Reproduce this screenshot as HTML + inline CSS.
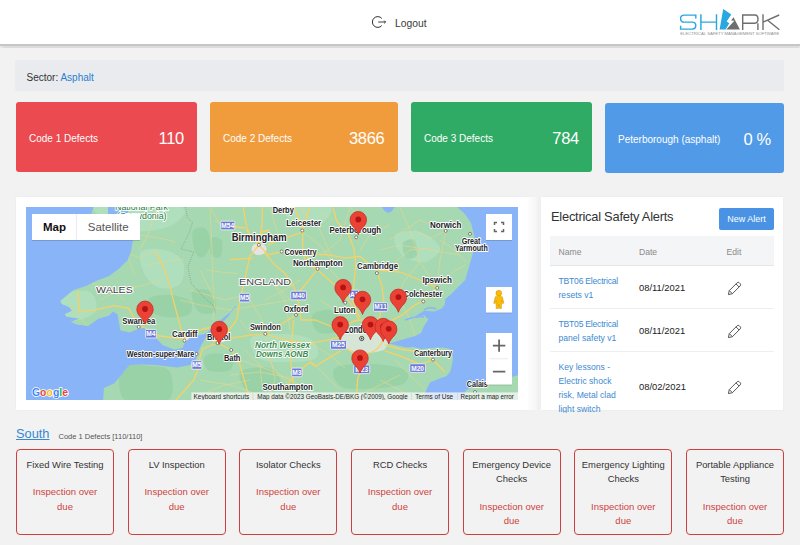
<!DOCTYPE html>
<html><head><meta charset="utf-8">
<style>
*{box-sizing:border-box}
html,body{margin:0;padding:0}
body{width:800px;height:545px;overflow:hidden;position:relative;background:#f2f2f2;font-family:"Liberation Sans",sans-serif;color:#333}
.abs{position:absolute}
#hdr{left:0;top:0;width:800px;height:44px;background:#fff;box-shadow:0 1.7px 0.5px #c6c6c6,0 3.6px 1px #dcdcdc}
.card{position:absolute;top:102px;height:70px;border-radius:3px;color:#fff}
.card .l{position:absolute;left:13px;top:2px;line-height:70px;font-size:10px}
.card .n{position:absolute;right:13px;top:1.1px;line-height:70px;font-size:16.5px;letter-spacing:-0.3px}
.panel{position:absolute;background:#fff;box-shadow:0 0 2px rgba(0,0,0,.05)}
.bc{position:absolute;top:449px;width:98px;height:86px;border:1.8px solid #cf3f3f;border-radius:4px;text-align:center;font-size:9.4px;line-height:14px;color:#333}
.bc .t{position:absolute;left:0;right:0;top:7.5px}
.bc .s{position:absolute;left:0;right:0;top:35.2px;color:#cc4341;font-size:9.5px;line-height:14.6px}
.bc .s2{top:49.5px}
.lk{position:absolute;left:17.5px;font-size:8.6px;line-height:13.9px;color:#3d8ad2}
.dt{position:absolute;left:98px;font-size:9.4px;line-height:12px;color:#222;margin-top:-0.6px}
.pc{position:absolute;left:187px}
.sep{position:absolute;left:9px;width:224px;height:1px;background:#eceef1}
</style></head><body>
<div id="hdr" class="abs">
  <svg class="abs" style="left:371.5px;top:16.3px" width="15" height="12" viewBox="0 0 15 12">
    <path d="M9.8 2.4 A5.4 5.4 0 1 0 9.8 9.6" fill="none" stroke="#333" stroke-width="1"/>
    <path d="M6.2 6 H13.6 M12.2 4.6 L13.6 6 L12.2 7.4" fill="none" stroke="#333" stroke-width="0.95"/>
  </svg>
  <div class="abs" style="left:395px;top:17.6px;font-size:10.3px;line-height:12px;color:#3a3a3a">Logout</div>
  <svg class="abs" style="left:675px;top:5px" width="110" height="35" viewBox="675 5 110 35">
    <g fill="none" stroke="#29a8e0" stroke-width="1.45">
      <path d="M695.8 18.4 V15.1 H684.2 Q680.6 15.1 680.6 18.4 Q680.6 22.1 684.2 22.1 H692.2 Q695.8 22.1 695.8 25.6 Q695.8 29.1 692.2 29.1 H680.6 V25.8"/>
      <path d="M700.9 14.3 V29.9 M716.5 14.3 V29.9 M700.9 22.1 H716.5"/>
    </g>
    <path d="M723.2 9.1 L731.3 14.6 L726.6 21.5 L729.3 23.2 L725.6 29.6 L719.6 29.6 Z" fill="#29a8e0"/>
    <path d="M733.5 17.2 L739.9 29.6 L726.3 29.6 L734.4 20.8 L731.1 20.4 Z" fill="#6d6e70"/>
    <g fill="none" stroke="#6d6e70" stroke-width="1.4">
      <path d="M742.7 29.9 V15 H754.8 Q758 15 758 19.1 Q758 23.2 754.8 23.2 H742.7 M757.9 23.2 V29.9"/>
      <path d="M763 14.3 V29.9 M763.6 21.8 L779.2 15 M767.6 20.2 L779.4 29.7"/>
    </g>
    <text x="680.3" y="35" font-family="Liberation Sans" font-size="2.9" fill="#8f8f8f" textLength="99" lengthAdjust="spacingAndGlyphs">ELECTRICAL SAFETY MANAGEMENT SOFTWARE</text>
  </svg>
</div>

<div class="abs" style="left:15px;top:59.5px;width:769px;height:31.5px;background:#e9ebee;border-radius:2px"></div>
<div class="abs" style="left:26.5px;top:71.6px;font-size:10px;line-height:12px;color:#333">Sector: <span style="color:#2a7fcf">Asphalt</span></div>

<div class="card" style="left:16px;width:181px;background:#eb4a50"><span class="l">Code 1 Defects</span><span class="n">110</span></div>
<div class="card" style="left:210px;width:187.5px;background:#f09c3c"><span class="l">Code 2 Defects</span><span class="n">3866</span></div>
<div class="card" style="left:411px;width:181px;background:#30ab65"><span class="l">Code 3 Defects</span><span class="n">784</span></div>
<div class="card" style="left:605px;width:179px;top:103px;background:#519ae7"><span class="l">Peterborough (asphalt)</span><span class="n">0 %</span></div>

<div class="panel" style="left:16px;top:197px;width:512px;height:213px"></div>
<div class="abs" style="left:528px;top:197px;width:11px;height:213px;background:linear-gradient(to right,rgba(255,255,255,.85),rgba(255,255,255,.35) 70%,rgba(0,0,0,.015))"></div>
<svg class="abs" style="left:0;top:0" width="800" height="545" viewBox="0 0 800 545">
<defs><clipPath id="mc"><rect x="26" y="207" width="492" height="193"/></clipPath>
<clipPath id="lc"><polygon points="93.5,206.0 91.5,214.0 133.0,240.0 131.0,251.0 127.8,260.0 119.0,268.8 108.7,276.2 97.0,280.6 86.7,285.7 73.5,290.1 60.3,301.1 61.7,304.0 69.1,307.0 72.0,310.7 64.7,314.3 66.2,316.5 79.4,318.7 70.6,321.7 76.4,324.6 88.2,326.1 98.5,318.7 108.7,315.8 113.1,311.4 117.5,314.3 119.0,323.1 120.5,330.5 130.0,332.5 138.0,329.0 144.0,328.0 152.5,332.5 155.0,337.0 162.5,345.0 173.8,349.4 182.5,348.0 185.0,342.5 190.0,337.5 200.0,335.0 206.2,333.5 213.0,327.0 220.0,320.5 229.0,313.2 230.0,314.6 222.0,323.0 213.0,332.0 206.2,337.0 201.2,345.0 198.1,352.5 196.2,358.8 190.0,365.0 177.5,367.5 155.0,365.0 142.5,364.4 130.0,365.0 127.0,368.0 121.8,374.7 114.0,383.5 104.0,388.0 103.0,401.0 422.3,401.0 426.3,390.0 430.0,382.5 438.8,378.8 446.3,376.3 450.5,371.3 453.0,358.8 452.0,351.0 449.0,348.5 441.7,347.5 431.4,348.0 421.1,349.0 413.8,347.0 406.4,347.5 397.6,345.5 389.0,343.5 394.7,341.7 406.4,338.5 415.2,336.0 421.1,333.0 424.0,326.0 428.5,319.6 424.0,315.2 412.3,318.2 424.0,310.8 434.3,311.6 441.7,308.6 444.6,305.0 445.3,299.1 450.5,294.7 456.4,288.8 465.2,280.0 471.0,260.0 475.4,244.0 474.0,235.0 471.0,223.0 465.0,214.0 456.0,206.0 395.2,206.0 392.0,211.0 388.5,213.0 384.7,211.0 381.0,206.0 128.5,206.0 128.0,214.0 108.0,214.0 108.0,206.0"/><polygon points="462.0,401.0 466.0,390.0 481.0,384.0 501.0,380.0 519.0,375.0 519.0,401.0"/></clipPath>
<g id="mk"><path d="M0,15.2 C-1,11.8 -3,9.6 -5.4,7.1 C-7.4,4.8 -8.2,2.6 -8.2,0.2 A8.2,8.2 0 1 1 8.2,0.2 C8.2,2.6 7.4,4.8 5.4,7.1 C3,9.6 1,11.8 0,15.2 Z" fill="#ea4335" stroke="#c5221f" stroke-width="0.7"/><circle cx="0" cy="0" r="2.9" fill="#b31412"/></g>
<filter id="sh" x="-10%" y="-10%" width="120%" height="130%"><feDropShadow dx="0" dy="0.6" stdDeviation="0.6" flood-color="#000" flood-opacity="0.25"/></filter>
</defs>
<g clip-path="url(#mc)">
<rect x="26" y="207" width="492" height="193" fill="#8ab4f8"/>
<polygon points="93.5,206.0 91.5,214.0 133.0,240.0 131.0,251.0 127.8,260.0 119.0,268.8 108.7,276.2 97.0,280.6 86.7,285.7 73.5,290.1 60.3,301.1 61.7,304.0 69.1,307.0 72.0,310.7 64.7,314.3 66.2,316.5 79.4,318.7 70.6,321.7 76.4,324.6 88.2,326.1 98.5,318.7 108.7,315.8 113.1,311.4 117.5,314.3 119.0,323.1 120.5,330.5 130.0,332.5 138.0,329.0 144.0,328.0 152.5,332.5 155.0,337.0 162.5,345.0 173.8,349.4 182.5,348.0 185.0,342.5 190.0,337.5 200.0,335.0 206.2,333.5 213.0,327.0 220.0,320.5 229.0,313.2 230.0,314.6 222.0,323.0 213.0,332.0 206.2,337.0 201.2,345.0 198.1,352.5 196.2,358.8 190.0,365.0 177.5,367.5 155.0,365.0 142.5,364.4 130.0,365.0 127.0,368.0 121.8,374.7 114.0,383.5 104.0,388.0 103.0,401.0 422.3,401.0 426.3,390.0 430.0,382.5 438.8,378.8 446.3,376.3 450.5,371.3 453.0,358.8 452.0,351.0 449.0,348.5 441.7,347.5 431.4,348.0 421.1,349.0 413.8,347.0 406.4,347.5 397.6,345.5 389.0,343.5 394.7,341.7 406.4,338.5 415.2,336.0 421.1,333.0 424.0,326.0 428.5,319.6 424.0,315.2 412.3,318.2 424.0,310.8 434.3,311.6 441.7,308.6 444.6,305.0 445.3,299.1 450.5,294.7 456.4,288.8 465.2,280.0 471.0,260.0 475.4,244.0 474.0,235.0 471.0,223.0 465.0,214.0 456.0,206.0 395.2,206.0 392.0,211.0 388.5,213.0 384.7,211.0 381.0,206.0 128.5,206.0 128.0,214.0 108.0,214.0 108.0,206.0" fill="#a6d9b1"/>
<polygon points="462.0,401.0 466.0,390.0 481.0,384.0 501.0,380.0 519.0,375.0 519.0,401.0" fill="#a6d9b1"/>
<g clip-path="url(#lc)">
<path d="M141.0,252.0 C144.3,247.8 158.0,248.3 165.0,250.0 C172.0,251.7 180.5,256.3 183.0,262.0 C185.5,267.7 183.8,279.7 180.0,284.0 C176.2,288.3 165.8,289.5 160.0,288.0 C154.2,286.5 148.2,281.0 145.0,275.0 C141.8,269.0 137.7,256.2 141.0,252.0Z" fill="#b8e3c4" opacity="0.6"/>
<path d="M95.0,207.0 C103.3,203.2 167.5,203.8 180.0,207.0 C192.5,210.2 178.3,222.2 170.0,226.0 C161.7,229.8 142.5,233.2 130.0,230.0 C117.5,226.8 86.7,210.8 95.0,207.0Z" fill="#b8e3c4" opacity="0.6"/>
<path d="M252.0,337.0 C256.5,333.0 275.0,333.5 285.0,334.0 C295.0,334.5 306.8,336.0 312.0,340.0 C317.2,344.0 320.5,354.3 316.0,358.0 C311.5,361.7 294.7,362.0 285.0,362.0 C275.3,362.0 263.5,362.2 258.0,358.0 C252.5,353.8 247.5,341.0 252.0,337.0Z" fill="#b8e3c4" opacity="0.6"/>
<path d="M60.0,296.0 C63.3,291.3 84.2,289.3 90.0,292.0 C95.8,294.7 98.3,307.3 95.0,312.0 C91.7,316.7 75.8,322.7 70.0,320.0 C64.2,317.3 56.7,300.7 60.0,296.0Z" fill="#b8e3c4" opacity="0.6"/>
<path d="M285.0,205.0 C291.3,202.7 324.2,203.8 330.0,207.0 C335.8,210.2 326.3,221.7 320.0,224.0 C313.7,226.3 297.8,224.2 292.0,221.0 C286.2,217.8 278.7,207.3 285.0,205.0Z" fill="#b8e3c4" opacity="0.6"/>
<path d="M395.0,235.0 C398.0,231.2 412.5,229.8 420.0,232.0 C427.5,234.2 439.2,243.0 440.0,248.0 C440.8,253.0 431.3,260.8 425.0,262.0 C418.7,263.2 407.0,259.5 402.0,255.0 C397.0,250.5 392.0,238.8 395.0,235.0Z" fill="#b8e3c4" opacity="0.6"/>
<path d="M150.0,298.0 C153.7,295.5 165.2,294.3 172.0,295.0 C178.8,295.7 188.3,298.7 191.0,302.0 C193.7,305.3 192.3,312.5 188.0,315.0 C183.7,317.5 171.3,317.8 165.0,317.0 C158.7,316.2 152.5,313.2 150.0,310.0 C147.5,306.8 146.3,300.5 150.0,298.0Z" fill="#94cea3" opacity="0.65"/>
<path d="M122.0,368.0 C126.2,362.3 142.0,365.3 150.0,366.0 C158.0,366.7 167.0,366.3 170.0,372.0 C173.0,377.7 175.5,395.3 168.0,400.0 C160.5,404.7 132.7,405.3 125.0,400.0 C117.3,394.7 117.8,373.7 122.0,368.0Z" fill="#94cea3" opacity="0.65"/>
<path d="M205.0,356.0 C207.8,353.3 220.3,353.0 225.0,354.0 C229.7,355.0 232.5,359.2 233.0,362.0 C233.5,364.8 232.2,369.7 228.0,371.0 C223.8,372.3 211.8,372.5 208.0,370.0 C204.2,367.5 202.2,358.7 205.0,356.0Z" fill="#94cea3" opacity="0.65"/>
<path d="M192.0,292.0 C193.7,288.5 204.0,288.7 208.0,290.0 C212.0,291.3 215.2,296.2 216.0,300.0 C216.8,303.8 216.0,311.2 213.0,313.0 C210.0,314.8 201.5,314.5 198.0,311.0 C194.5,307.5 190.3,295.5 192.0,292.0Z" fill="#94cea3" opacity="0.65"/>
<path d="M193.0,231.0 C194.8,227.2 203.2,226.7 206.0,229.0 C208.8,231.3 210.5,240.3 210.0,245.0 C209.5,249.7 205.5,255.8 203.0,257.0 C200.5,258.2 196.7,256.3 195.0,252.0 C193.3,247.7 191.2,234.8 193.0,231.0Z" fill="#94cea3" opacity="0.65"/>
<path d="M212.0,238.0 C213.8,235.8 220.7,237.8 222.0,241.0 C223.3,244.2 221.8,254.8 220.0,257.0 C218.2,259.2 212.3,257.2 211.0,254.0 C209.7,250.8 210.2,240.2 212.0,238.0Z" fill="#94cea3" opacity="0.65"/>
<path d="M403.0,243.0 C404.3,240.0 411.7,238.0 414.0,240.0 C416.3,242.0 418.3,252.0 417.0,255.0 C415.7,258.0 408.3,260.0 406.0,258.0 C403.7,256.0 401.7,246.0 403.0,243.0Z" fill="#94cea3" opacity="0.65"/>
<path d="M312.0,316.0 C314.0,312.3 325.0,309.0 330.0,310.0 C335.0,311.0 341.2,318.3 342.0,322.0 C342.8,325.7 339.0,330.3 335.0,332.0 C331.0,333.7 321.8,334.7 318.0,332.0 C314.2,329.3 310.0,319.7 312.0,316.0Z" fill="#94cea3" opacity="0.65"/>
<path d="M335.0,368.0 C339.2,364.0 358.3,363.7 370.0,364.0 C381.7,364.3 400.0,366.5 405.0,370.0 C410.0,373.5 410.0,382.0 400.0,385.0 C390.0,388.0 355.8,390.8 345.0,388.0 C334.2,385.2 330.8,372.0 335.0,368.0Z" fill="#94cea3" opacity="0.65"/>
<path d="M100.0,232.0 C104.3,227.0 124.3,231.3 128.0,236.0 C131.7,240.7 126.3,255.0 122.0,260.0 C117.7,265.0 105.7,270.7 102.0,266.0 C98.3,261.3 95.7,237.0 100.0,232.0Z" fill="#94cea3" opacity="0.65"/>
<path d="M240.0,372.0 C243.3,368.0 263.3,365.8 270.0,368.0 C276.7,370.2 283.3,381.0 280.0,385.0 C276.7,389.0 256.7,394.2 250.0,392.0 C243.3,389.8 236.7,376.0 240.0,372.0Z" fill="#94cea3" opacity="0.65"/>
<path d="M342,332 Q350,327 362,329 Q378,328 386,334 Q392,342 384,350 Q370,355 355,352 Q343,349 341,341 Z" fill="#e2e7e0" opacity="0.8"/>
<ellipse cx="259" cy="249" rx="7.5" ry="6" fill="#e6e4e2"/>
<ellipse cx="221" cy="339" rx="5" ry="3.5" fill="#e2e6e2"/>
<ellipse cx="186" cy="339" rx="4" ry="2.5" fill="#e2e6e2"/>
<path d="M155.0,207.0 L150.0,230.0 L140.0,250.0" fill="none" stroke="#e8d68c" stroke-width="0.75" opacity="0.8"/>
<path d="M110.0,220.0 L125.0,250.0 L135.0,275.0" fill="none" stroke="#e8d68c" stroke-width="0.75" opacity="0.8"/>
<path d="M200.0,270.0 L215.0,300.0 L213.0,320.0" fill="none" stroke="#e8d68c" stroke-width="0.75" opacity="0.8"/>
<path d="M190.0,290.0 L225.0,300.0 L245.0,295.0" fill="none" stroke="#e8d68c" stroke-width="0.75" opacity="0.8"/>
<path d="M265.0,300.0 L285.0,290.0 L300.0,280.0" fill="none" stroke="#e8d68c" stroke-width="0.75" opacity="0.8"/>
<path d="M230.0,310.0 L260.0,305.0 L290.0,300.0" fill="none" stroke="#e8d68c" stroke-width="0.75" opacity="0.8"/>
<path d="M300.0,207.0 L320.0,230.0 L333.0,260.0" fill="none" stroke="#e8d68c" stroke-width="0.75" opacity="0.8"/>
<path d="M320.0,256.0 L340.0,240.0 L350.0,207.0" fill="none" stroke="#e8d68c" stroke-width="0.75" opacity="0.8"/>
<path d="M380.0,250.0 L400.0,245.0 L430.0,250.0 L460.0,255.0" fill="none" stroke="#e8d68c" stroke-width="0.75" opacity="0.8"/>
<path d="M400.0,207.0 L410.0,230.0 L420.0,262.0 L437.0,288.0" fill="none" stroke="#e8d68c" stroke-width="0.75" opacity="0.8"/>
<path d="M437.0,288.0 L455.0,270.0 L466.0,265.0" fill="none" stroke="#e8d68c" stroke-width="0.75" opacity="0.8"/>
<path d="M446.0,231.0 L440.0,260.0 L437.0,288.0" fill="none" stroke="#e8d68c" stroke-width="0.75" opacity="0.8"/>
<path d="M390.0,240.0 L420.0,220.0 L446.0,231.0" fill="none" stroke="#e8d68c" stroke-width="0.75" opacity="0.8"/>
<path d="M395.0,300.0 L405.0,280.0 L420.0,262.0" fill="none" stroke="#e8d68c" stroke-width="0.75" opacity="0.8"/>
<path d="M270.0,280.0 L285.0,300.0 L290.0,330.0" fill="none" stroke="#e8d68c" stroke-width="0.75" opacity="0.8"/>
<path d="M300.0,350.0 L320.0,370.0 L340.0,390.0" fill="none" stroke="#e8d68c" stroke-width="0.75" opacity="0.8"/>
<path d="M240.0,360.0 L270.0,370.0 L300.0,385.0" fill="none" stroke="#e8d68c" stroke-width="0.75" opacity="0.8"/>
<path d="M200.0,380.0 L230.0,385.0 L260.0,395.0" fill="none" stroke="#e8d68c" stroke-width="0.75" opacity="0.8"/>
<path d="M395.0,360.0 L410.0,375.0 L425.0,390.0" fill="none" stroke="#e8d68c" stroke-width="0.75" opacity="0.8"/>
<path d="M130.0,345.0 L160.0,337.0" fill="none" stroke="#e8d68c" stroke-width="0.75" opacity="0.8"/>
<path d="M70.0,305.0 L90.0,330.0" fill="none" stroke="#e8d68c" stroke-width="0.75" opacity="0.8"/>
<path d="M210.0,207.0 L220.0,225.0 L231.0,226.0" fill="none" stroke="#e8d68c" stroke-width="0.75" opacity="0.8"/>
<path d="M350.0,207.0 L365.0,225.0 L380.0,240.0" fill="none" stroke="#e8d68c" stroke-width="0.75" opacity="0.8"/>
<path d="M270.0,207.0 L275.0,225.0 L280.0,240.0" fill="none" stroke="#e8d68c" stroke-width="0.75" opacity="0.8"/>
<path d="M240.0,320.0 L260.0,345.0 L275.0,370.0 L290.0,385.0" fill="none" stroke="#e8d68c" stroke-width="0.75" opacity="0.8"/>
<path d="M330.0,270.0 L345.0,285.0 L343.0,300.0" fill="none" stroke="#e8d68c" stroke-width="0.75" opacity="0.8"/>
<path d="M300.0,230.0 L320.0,245.0 L335.0,265.0" fill="none" stroke="#e8d68c" stroke-width="0.75" opacity="0.8"/>
<path d="M140.0,235.0 L160.0,238.0 L175.0,242.0" fill="none" stroke="#e8d68c" stroke-width="0.75" opacity="0.8"/>
<path d="M147.0,265.0 L165.0,262.0 L183.8,259.5" fill="none" stroke="#e8d68c" stroke-width="0.75" opacity="0.8"/>
<path d="M210.0,207.0 L212.0,250.0 L213.5,300.0" fill="none" stroke="#e8d68c" stroke-width="0.75" opacity="0.8"/>
<path d="M206.5,270.0 L220.0,272.0 L238.0,273.5" fill="none" stroke="#e8d68c" stroke-width="0.75" opacity="0.8"/>
<path d="M215.0,221.0 L230.0,226.0" fill="none" stroke="#e8d68c" stroke-width="0.75" opacity="0.8"/>
<path d="M100.0,300.0 L120.0,290.0 L145.0,285.0 L160.0,280.0" fill="none" stroke="#e8d68c" stroke-width="0.75" opacity="0.8"/>
<path d="M120.0,250.0 L140.0,258.0 L155.0,251.0" fill="none" stroke="#e8d68c" stroke-width="0.75" opacity="0.8"/>
<path d="M90.0,282.0 L110.0,290.0 L125.0,300.0" fill="none" stroke="#e8d68c" stroke-width="0.75" opacity="0.8"/>
<path d="M180.0,300.0 L200.0,305.0 L230.0,310.0" fill="none" stroke="#e8d68c" stroke-width="0.75" opacity="0.8"/>
<path d="M250.0,300.0 L262.0,320.0 L265.3,333.8" fill="none" stroke="#e8d68c" stroke-width="0.75" opacity="0.8"/>
<path d="M230.0,375.0 L260.0,372.0 L290.0,378.0" fill="none" stroke="#e8d68c" stroke-width="0.75" opacity="0.8"/>
<path d="M200.0,395.0 L225.0,385.0 L250.0,380.0" fill="none" stroke="#e8d68c" stroke-width="0.75" opacity="0.8"/>
<path d="M265.3,333.8 L270.0,355.0 L275.0,380.0 L268.0,400.0" fill="none" stroke="#e8d68c" stroke-width="0.75" opacity="0.8"/>
<path d="M310.0,343.0 L330.0,355.0 L345.0,368.0" fill="none" stroke="#e8d68c" stroke-width="0.75" opacity="0.8"/>
<path d="M380.0,380.0 L400.0,390.0 L415.0,400.0" fill="none" stroke="#e8d68c" stroke-width="0.75" opacity="0.8"/>
<path d="M320.0,300.0 L335.0,310.0 L345.0,325.0" fill="none" stroke="#e8d68c" stroke-width="0.75" opacity="0.8"/>
<path d="M275.0,285.0 L290.0,300.0" fill="none" stroke="#e8d68c" stroke-width="0.75" opacity="0.8"/>
<path d="M360.0,250.0 L370.0,235.0 L390.0,225.0" fill="none" stroke="#e8d68c" stroke-width="0.75" opacity="0.8"/>
<path d="M395.0,262.0 L410.0,250.0 L430.0,248.0" fill="none" stroke="#e8d68c" stroke-width="0.75" opacity="0.8"/>
<path d="M300.0,207.0 L305.0,215.0" fill="none" stroke="#e8d68c" stroke-width="0.75" opacity="0.8"/>
<path d="M320.0,212.0 L333.0,221.0" fill="none" stroke="#e8d68c" stroke-width="0.75" opacity="0.8"/>
<path d="M400.0,300.0 L410.0,320.0 L415.0,335.0" fill="none" stroke="#e8d68c" stroke-width="0.75" opacity="0.8"/>
<path d="M360.0,395.0 L380.0,385.0 L400.0,375.0" fill="none" stroke="#e8d68c" stroke-width="0.75" opacity="0.8"/>
<path d="M440.0,240.0 L455.0,250.0 L466.0,262.0" fill="none" stroke="#e8d68c" stroke-width="0.75" opacity="0.8"/>
<path d="M414.0,230.0 L430.0,238.0 L446.0,231.0" fill="none" stroke="#e8d68c" stroke-width="0.75" opacity="0.8"/>
<path d="M245.0,350.0 L260.0,365.0 L262.0,385.0" fill="none" stroke="#e8d68c" stroke-width="0.75" opacity="0.8"/>
<path d="M185.5,207.0 L187.3,217.5 L192.5,222.8 L189.0,233.3 L181.1,249.0 L193.7,252.0 L188.0,266.5 L191.0,283.0 L204.7,298.0 L213.0,305.0 L215.7,313.0" fill="none" stroke="#7d8a80" stroke-width="0.7" stroke-dasharray="0.8,1.3"/>
<path d="M229,314 Q233,310 236,306" fill="none" stroke="#8ab4f8" stroke-width="0.9"/>
<path d="M424,310 Q430,306 436,309 M405,320 Q415,316 424,317" fill="none" stroke="#8ab4f8" stroke-width="1.5"/>
<path d="M138.8,326.9 L142.5,326.9 L150.0,331.0 L157.5,335.6 L171.2,337.5 L183.8,338.8 L200.0,330.0 L210.0,327.5 L220.0,332.0 L228.8,338.7 L248.2,335.4 L264.5,333.8 L277.5,337.9 L290.5,341.1 L310.0,342.8 L323.0,341.2 L338.5,337.4" fill="none" stroke="#f7d165" stroke-width="1.3" stroke-linejoin="round"/>
<path d="M258.9,244.9 L249.8,256.4 L246.5,271.3 L243.2,286.2 L240.0,301.0 L236.6,320.0 L226.0,334.0 L217.5,343.0 L211.2,340.0" fill="none" stroke="#f7d165" stroke-width="1.3" stroke-linejoin="round"/>
<path d="M217.5,343.0 L202.5,348.8 L200.0,357.5 L197.5,370.0 L193.8,380.0 L186.5,388.2 L175.0,401.0" fill="none" stroke="#f7d165" stroke-width="1.3" stroke-linejoin="round"/>
<path d="M243.3,207.0 L245.0,217.5 L246.8,228.0 L252.0,238.5 L258.9,244.9" fill="none" stroke="#f7d165" stroke-width="1.3" stroke-linejoin="round"/>
<path d="M231.0,226.3 L245.0,228.0" fill="none" stroke="#f7d165" stroke-width="1.3" stroke-linejoin="round"/>
<path d="M258.9,244.9 L268.0,254.8 L281.7,251.5" fill="none" stroke="#f7d165" stroke-width="1.3" stroke-linejoin="round"/>
<path d="M268.0,244.9 L279.6,239.9 L299.4,233.3 L302.7,230.0 L306.0,218.0 L310.0,207.0" fill="none" stroke="#f7d165" stroke-width="1.3" stroke-linejoin="round"/>
<path d="M262.5,207.0 L262.0,225.0 L258.9,244.9" fill="none" stroke="#f7d165" stroke-width="1.3" stroke-linejoin="round"/>
<path d="M294.5,207.0 L300.0,222.0 L302.7,230.0 L302.7,251.5 L306.0,263.0 L319.2,271.3 L332.4,282.9 L345.6,296.0 L352.2,306.0 L358.8,320.0" fill="none" stroke="#f7d165" stroke-width="1.3" stroke-linejoin="round"/>
<path d="M333.0,207.0 L336.5,221.0 L348.8,235.0 L354.0,249.0 L355.8,263.0 L354.0,284.0 L352.2,300.0 L360.0,318.0" fill="none" stroke="#f7d165" stroke-width="1.3" stroke-linejoin="round"/>
<path d="M281.7,251.5 L296.0,253.1 L329.0,254.8 L345.6,258.1 L360.0,256.4 L376.8,270.0 L400.0,272.0 L420.0,280.0 L437.2,287.9" fill="none" stroke="#f7d165" stroke-width="1.3" stroke-linejoin="round"/>
<path d="M376.8,271.8 L382.0,285.8 L383.8,300.0 L381.0,310.0 L379.0,320.0" fill="none" stroke="#f7d165" stroke-width="1.3" stroke-linejoin="round"/>
<path d="M384.8,323.9 L400.2,316.2 L415.6,304.6 L423.3,301.4 L437.2,287.9" fill="none" stroke="#f7d165" stroke-width="1.3" stroke-linejoin="round"/>
<path d="M264.7,253.1 L274.6,264.7 L284.5,273.0 L292.8,284.5 L296.0,292.8 L299.4,306.0 L301.0,320.0 L315.4,320.0 L340.0,330.0" fill="none" stroke="#f7d165" stroke-width="1.3" stroke-linejoin="round"/>
<path d="M296.0,315.0 L280.0,325.0 L265.3,333.8" fill="none" stroke="#f7d165" stroke-width="1.3" stroke-linejoin="round"/>
<path d="M293.8,320.0 L292.1,336.2 L290.5,360.6 L293.8,385.0 L288.0,395.0" fill="none" stroke="#f7d165" stroke-width="1.3" stroke-linejoin="round"/>
<path d="M340.5,350.9 L315.4,366.3 L310.0,362.2 L293.8,375.2 L288.0,384.4" fill="none" stroke="#f7d165" stroke-width="1.3" stroke-linejoin="round"/>
<path d="M359.7,356.7 L360.7,372.0 L357.8,378.0 L356.0,400.0" fill="none" stroke="#f7d165" stroke-width="1.3" stroke-linejoin="round"/>
<path d="M384.8,350.9 L402.1,356.7 L420.0,364.4 L433.0,360.0 L445.0,372.0" fill="none" stroke="#f7d165" stroke-width="1.3" stroke-linejoin="round"/>
<path d="M384.8,345.1 L400.2,349.0 L420.0,352.0 L433.0,359.6" fill="none" stroke="#f7d165" stroke-width="1.3" stroke-linejoin="round"/>
<path d="M78.0,290.6 L79.0,311.2 L93.0,310.3 L113.8,305.6 L128.8,308.4 L132.5,315.0 L138.8,326.9" fill="none" stroke="#f7d165" stroke-width="1.3" stroke-linejoin="round"/>
<path d="M155.0,251.2 L162.5,264.4 L170.0,286.9 L173.8,301.9 L181.2,330.0 L184.4,338.0" fill="none" stroke="#f7d165" stroke-width="1.3" stroke-linejoin="round"/>
<path d="M217.5,343.0 L231.2,350.0 L240.0,365.0 L250.0,400.0" fill="none" stroke="#f7d165" stroke-width="1.3" stroke-linejoin="round"/>
<path d="M258.9,244.9 L262.0,232.0 L269.6,230.0" fill="none" stroke="#f7d165" stroke-width="1.3" stroke-linejoin="round"/>
<path d="M258.9,244.9 L250.0,235.0 L246.5,230.0" fill="none" stroke="#f7d165" stroke-width="1.3" stroke-linejoin="round"/>
<path d="M302.7,251.5 L317.5,268.8 L309.3,279.6 L299.0,292.0" fill="none" stroke="#f7d165" stroke-width="1.3" stroke-linejoin="round"/>
<path d="M230.0,259.7 L253.1,258.1" fill="none" stroke="#f7d165" stroke-width="1.3" stroke-linejoin="round"/>
<ellipse cx="362" cy="337" rx="21" ry="17" fill="none" stroke="#f7d165" stroke-width="1.3"/>
</g>
<rect x="220.7" y="221.2" width="14" height="8.6" rx="1" fill="#6e7bd6" stroke="#fff" stroke-width="0.7"/>
<text x="227.7" y="227.9" font-family="Liberation Sans" font-size="6.6" font-weight="bold" fill="#fff" text-anchor="middle">M54</text>
<rect x="239.5" y="293.3" width="10.2" height="8.6" rx="1" fill="#6e7bd6" stroke="#fff" stroke-width="0.7"/>
<text x="244.6" y="300.0" font-family="Liberation Sans" font-size="6.6" font-weight="bold" fill="#fff" text-anchor="middle">M5</text>
<rect x="145.6" y="329.4" width="10.7" height="8.6" rx="1" fill="#6e7bd6" stroke="#fff" stroke-width="0.7"/>
<text x="150.95" y="336.09999999999997" font-family="Liberation Sans" font-size="6.6" font-weight="bold" fill="#fff" text-anchor="middle">M4</text>
<rect x="192" y="360.7" width="9.8" height="8.6" rx="1" fill="#6e7bd6" stroke="#fff" stroke-width="0.7"/>
<text x="196.9" y="367.4" font-family="Liberation Sans" font-size="6.6" font-weight="bold" fill="#fff" text-anchor="middle">M5</text>
<rect x="290.8" y="291.2" width="15.6" height="8.6" rx="1" fill="#6e7bd6" stroke="#fff" stroke-width="0.7"/>
<text x="298.6" y="297.9" font-family="Liberation Sans" font-size="6.6" font-weight="bold" fill="#fff" text-anchor="middle">M40</text>
<rect x="373.5" y="302.7" width="14.2" height="8.6" rx="1" fill="#6e7bd6" stroke="#fff" stroke-width="0.7"/>
<text x="380.6" y="309.4" font-family="Liberation Sans" font-size="6.6" font-weight="bold" fill="#fff" text-anchor="middle">M11</text>
<rect x="330.5" y="340.59999999999997" width="16" height="8.6" rx="1" fill="#6e7bd6" stroke="#fff" stroke-width="0.7"/>
<text x="338.5" y="347.29999999999995" font-family="Liberation Sans" font-size="6.6" font-weight="bold" fill="#fff" text-anchor="middle">M25</text>
<rect x="291.7" y="368.09999999999997" width="10.3" height="8.6" rx="1" fill="#6e7bd6" stroke="#fff" stroke-width="0.7"/>
<text x="296.84999999999997" y="374.79999999999995" font-family="Liberation Sans" font-size="6.6" font-weight="bold" fill="#fff" text-anchor="middle">M3</text>
<rect x="353.7" y="365.0" width="16" height="8.6" rx="1" fill="#6e7bd6" stroke="#fff" stroke-width="0.7"/>
<text x="361.7" y="371.7" font-family="Liberation Sans" font-size="6.6" font-weight="bold" fill="#fff" text-anchor="middle">M23</text>
<rect x="409.8" y="363.8" width="15.6" height="8.6" rx="1" fill="#6e7bd6" stroke="#fff" stroke-width="0.7"/>
<text x="417.6" y="370.5" font-family="Liberation Sans" font-size="6.6" font-weight="bold" fill="#fff" text-anchor="middle">M20</text>
<rect x="349.6" y="290.2" width="9" height="8.6" rx="1" fill="#6e7bd6" stroke="#fff" stroke-width="0.7"/>
<text x="354.1" y="296.9" font-family="Liberation Sans" font-size="6.6" font-weight="bold" fill="#fff" text-anchor="middle">A1</text>
<circle cx="138.75" cy="326.9" r="1.5" fill="#fff" stroke="#555" stroke-width="0.7"/>
<circle cx="184.4" cy="340.6" r="1.5" fill="#fff" stroke="#555" stroke-width="0.7"/>
<circle cx="231.2" cy="350" r="1.5" fill="#fff" stroke="#555" stroke-width="0.7"/>
<circle cx="196.5" cy="354" r="1.5" fill="#fff" stroke="#555" stroke-width="0.7"/>
<circle cx="302.2" cy="230.5" r="1.5" fill="#fff" stroke="#555" stroke-width="0.7"/>
<circle cx="356.2" cy="237.3" r="1.5" fill="#fff" stroke="#555" stroke-width="0.7"/>
<circle cx="445.7" cy="230.9" r="1.5" fill="#fff" stroke="#555" stroke-width="0.7"/>
<circle cx="470" cy="233.9" r="1.5" fill="#fff" stroke="#555" stroke-width="0.7"/>
<circle cx="281.7" cy="251.5" r="1.5" fill="#fff" stroke="#555" stroke-width="0.7"/>
<circle cx="317.5" cy="268.8" r="1.5" fill="#fff" stroke="#555" stroke-width="0.7"/>
<circle cx="376.9" cy="273.1" r="1.5" fill="#fff" stroke="#555" stroke-width="0.7"/>
<circle cx="437.2" cy="287.9" r="1.5" fill="#fff" stroke="#555" stroke-width="0.7"/>
<circle cx="423.3" cy="301.4" r="1.5" fill="#fff" stroke="#555" stroke-width="0.7"/>
<circle cx="345.3" cy="302.7" r="1.5" fill="#fff" stroke="#555" stroke-width="0.7"/>
<circle cx="296" cy="315" r="1.5" fill="#fff" stroke="#555" stroke-width="0.7"/>
<circle cx="433" cy="359.6" r="1.5" fill="#fff" stroke="#555" stroke-width="0.7"/>
<circle cx="258.9" cy="244.9" r="1.5" fill="#fff" stroke="#555" stroke-width="0.7"/>
<circle cx="217.5" cy="343" r="1.5" fill="#fff" stroke="#555" stroke-width="0.7"/>
<circle cx="475" cy="392" r="1.5" fill="#fff" stroke="#555" stroke-width="0.7"/>
<circle cx="265.3" cy="333.8" r="1.5" fill="#fff" stroke="#555" stroke-width="0.7"/>
<circle cx="361.7" cy="338.5" r="2.1" fill="#fff" stroke="#333" stroke-width="0.9"/><circle cx="361.7" cy="338.5" r="0.9" fill="#333"/>
<text x="115" y="210.0" font-family="Liberation Sans" font-size="9" font-style="normal" font-weight="normal" fill="#237a40" stroke="#fff" stroke-width="1.8" stroke-linejoin="round" paint-order="stroke" textLength="53.0" lengthAdjust="spacingAndGlyphs">National Park</text>
<text x="117" y="219.2" font-family="Liberation Sans" font-size="9" font-style="normal" font-weight="normal" fill="#237a40" stroke="#fff" stroke-width="1.8" stroke-linejoin="round" paint-order="stroke" textLength="49.5" lengthAdjust="spacingAndGlyphs">(Snowdonia)</text>
<text x="231.7" y="241.2" font-family="Liberation Sans" font-size="10.5" font-style="normal" font-weight="bold" fill="#202124" stroke="#fff" stroke-width="1.8" stroke-linejoin="round" paint-order="stroke" textLength="54.8" lengthAdjust="spacingAndGlyphs">Birmingham</text>
<text x="239" y="285.0" font-family="Liberation Sans" font-size="9" font-style="normal" font-weight="normal" fill="#3c4043" stroke="#fff" stroke-width="1.8" stroke-linejoin="round" paint-order="stroke" textLength="52.0" lengthAdjust="spacingAndGlyphs">ENGLAND</text>
<text x="96" y="293.0" font-family="Liberation Sans" font-size="9" font-style="normal" font-weight="normal" fill="#3c4043" stroke="#fff" stroke-width="1.8" stroke-linejoin="round" paint-order="stroke" textLength="36.8" lengthAdjust="spacingAndGlyphs">WALES</text>
<text x="122.3" y="324.2" font-family="Liberation Sans" font-size="8.8" font-style="normal" font-weight="bold" fill="#202124" stroke="#fff" stroke-width="1.8" stroke-linejoin="round" paint-order="stroke" textLength="32.9" lengthAdjust="spacingAndGlyphs">Swansea</text>
<text x="171.9" y="336.8" font-family="Liberation Sans" font-size="8.8" font-style="normal" font-weight="bold" fill="#202124" stroke="#fff" stroke-width="1.8" stroke-linejoin="round" paint-order="stroke" textLength="25.6" lengthAdjust="spacingAndGlyphs">Cardiff</text>
<text x="206.9" y="339.5" font-family="Liberation Sans" font-size="8.8" font-style="normal" font-weight="bold" fill="#202124" stroke="#fff" stroke-width="1.8" stroke-linejoin="round" paint-order="stroke" textLength="23.4" lengthAdjust="spacingAndGlyphs">Bristol</text>
<text x="249.9" y="330.0" font-family="Liberation Sans" font-size="8.8" font-style="normal" font-weight="bold" fill="#202124" stroke="#fff" stroke-width="1.8" stroke-linejoin="round" paint-order="stroke" textLength="30.8" lengthAdjust="spacingAndGlyphs">Swindon</text>
<text x="255" y="347.8" font-family="Liberation Sans" font-size="8.8" font-style="italic" font-weight="bold" fill="#3b8c4f" stroke="#fff" stroke-width="1.8" stroke-linejoin="round" paint-order="stroke" textLength="55.0" lengthAdjust="spacingAndGlyphs">North Wessex</text>
<text x="256" y="356.8" font-family="Liberation Sans" font-size="8.8" font-style="italic" font-weight="bold" fill="#3b8c4f" stroke="#fff" stroke-width="1.8" stroke-linejoin="round" paint-order="stroke" textLength="52.3" lengthAdjust="spacingAndGlyphs">Downs AONB</text>
<text x="126.75" y="357.1" font-family="Liberation Sans" font-size="8.6" font-style="normal" font-weight="bold" fill="#202124" stroke="#fff" stroke-width="1.8" stroke-linejoin="round" paint-order="stroke" textLength="67.5" lengthAdjust="spacingAndGlyphs">Weston-super-Mare</text>
<text x="223.9" y="360.6" font-family="Liberation Sans" font-size="8.8" font-style="normal" font-weight="bold" fill="#202124" stroke="#fff" stroke-width="1.8" stroke-linejoin="round" paint-order="stroke" textLength="16.5" lengthAdjust="spacingAndGlyphs">Bath</text>
<text x="272.7" y="213.0" font-family="Liberation Sans" font-size="8.8" font-style="normal" font-weight="bold" fill="#202124" stroke="#fff" stroke-width="1.8" stroke-linejoin="round" paint-order="stroke" textLength="21.1" lengthAdjust="spacingAndGlyphs">Derby</text>
<text x="286.2" y="226.1" font-family="Liberation Sans" font-size="8.8" font-style="normal" font-weight="bold" fill="#202124" stroke="#fff" stroke-width="1.8" stroke-linejoin="round" paint-order="stroke" textLength="35.0" lengthAdjust="spacingAndGlyphs">Leicester</text>
<text x="329.6" y="233.3" font-family="Liberation Sans" font-size="8.8" font-style="normal" font-weight="bold" fill="#202124" stroke="#fff" stroke-width="1.8" stroke-linejoin="round" paint-order="stroke" textLength="51.5" lengthAdjust="spacingAndGlyphs">Peterborough</text>
<text x="430" y="227.8" font-family="Liberation Sans" font-size="8.8" font-style="normal" font-weight="bold" fill="#202124" stroke="#fff" stroke-width="1.8" stroke-linejoin="round" paint-order="stroke" textLength="31.3" lengthAdjust="spacingAndGlyphs">Norwich</text>
<text x="461.7" y="243.6" font-family="Liberation Sans" font-size="8.3" font-style="normal" font-weight="bold" fill="#202124" stroke="#fff" stroke-width="1.8" stroke-linejoin="round" paint-order="stroke" textLength="18.6" lengthAdjust="spacingAndGlyphs">Great</text>
<text x="455" y="251.2" font-family="Liberation Sans" font-size="8.3" font-style="normal" font-weight="bold" fill="#202124" stroke="#fff" stroke-width="1.8" stroke-linejoin="round" paint-order="stroke" textLength="32.8" lengthAdjust="spacingAndGlyphs">Yarmouth</text>
<text x="284.5" y="254.7" font-family="Liberation Sans" font-size="8.8" font-style="normal" font-weight="bold" fill="#202124" stroke="#fff" stroke-width="1.8" stroke-linejoin="round" paint-order="stroke" textLength="32.2" lengthAdjust="spacingAndGlyphs">Coventry</text>
<text x="292.9" y="265.8" font-family="Liberation Sans" font-size="8.8" font-style="normal" font-weight="bold" fill="#202124" stroke="#fff" stroke-width="1.8" stroke-linejoin="round" paint-order="stroke" textLength="49.8" lengthAdjust="spacingAndGlyphs">Northampton</text>
<text x="357" y="269.2" font-family="Liberation Sans" font-size="8.8" font-style="normal" font-weight="bold" fill="#202124" stroke="#fff" stroke-width="1.8" stroke-linejoin="round" paint-order="stroke" textLength="41.0" lengthAdjust="spacingAndGlyphs">Cambridge</text>
<text x="422.4" y="283.1" font-family="Liberation Sans" font-size="8.8" font-style="normal" font-weight="bold" fill="#202124" stroke="#fff" stroke-width="1.8" stroke-linejoin="round" paint-order="stroke" textLength="29.6" lengthAdjust="spacingAndGlyphs">Ipswich</text>
<text x="403.5" y="297.4" font-family="Liberation Sans" font-size="8.8" font-style="normal" font-weight="bold" fill="#202124" stroke="#fff" stroke-width="1.8" stroke-linejoin="round" paint-order="stroke" textLength="38.8" lengthAdjust="spacingAndGlyphs">Colchester</text>
<text x="334" y="313.4" font-family="Liberation Sans" font-size="8.8" font-style="normal" font-weight="bold" fill="#202124" stroke="#fff" stroke-width="1.8" stroke-linejoin="round" paint-order="stroke" textLength="21.5" lengthAdjust="spacingAndGlyphs">Luton</text>
<text x="283.7" y="312.2" font-family="Liberation Sans" font-size="8.8" font-style="normal" font-weight="bold" fill="#202124" stroke="#fff" stroke-width="1.8" stroke-linejoin="round" paint-order="stroke" textLength="24.8" lengthAdjust="spacingAndGlyphs">Oxford</text>
<text x="344.4" y="333.0" font-family="Liberation Sans" font-size="10.5" font-style="normal" font-weight="bold" fill="#202124" stroke="#fff" stroke-width="1.8" stroke-linejoin="round" paint-order="stroke" textLength="27.4" lengthAdjust="spacingAndGlyphs">London</text>
<text x="414" y="355.6" font-family="Liberation Sans" font-size="8.8" font-style="normal" font-weight="bold" fill="#202124" stroke="#fff" stroke-width="1.8" stroke-linejoin="round" paint-order="stroke" textLength="38.0" lengthAdjust="spacingAndGlyphs">Canterbury</text>
<text x="262.4" y="390.4" font-family="Liberation Sans" font-size="8.8" font-style="normal" font-weight="bold" fill="#202124" stroke="#fff" stroke-width="1.8" stroke-linejoin="round" paint-order="stroke" textLength="50.4" lengthAdjust="spacingAndGlyphs">Southampton</text>
<text x="466.8" y="387.3" font-family="Liberation Sans" font-size="8.8" font-style="normal" font-weight="bold" fill="#202124" stroke="#fff" stroke-width="1.8" stroke-linejoin="round" paint-order="stroke" textLength="21.0" lengthAdjust="spacingAndGlyphs">Calais</text>
<use href="#mk" x="145" y="309.0"/>
<use href="#mk" x="219.2" y="329.2"/>
<use href="#mk" x="358.3" y="219.5"/>
<use href="#mk" x="343.1" y="287.4"/>
<use href="#mk" x="362.5" y="299.3"/>
<use href="#mk" x="398.4" y="297.1"/>
<use href="#mk" x="340.2" y="324.6"/>
<use href="#mk" x="370.5" y="324.6"/>
<use href="#mk" x="383.2" y="326.3"/>
<use href="#mk" x="388.7" y="328.8"/>
<use href="#mk" x="360" y="357.9"/>
<text x="32" y="396.3" font-family="Liberation Sans" font-size="11" font-weight="bold" stroke="#fff" stroke-width="1.6" paint-order="stroke" textLength="36" lengthAdjust="spacingAndGlyphs"><tspan fill="#4285f4">G</tspan><tspan fill="#ea4335">o</tspan><tspan fill="#fbbc05">o</tspan><tspan fill="#4285f4">g</tspan><tspan fill="#34a853">l</tspan><tspan fill="#ea4335">e</tspan></text>
<rect x="191.4" y="392.4" width="330" height="8" fill="#f5f5f5" opacity="0.8"/>
<text x="193.5" y="398.6" font-family="Liberation Sans" font-size="6.3" fill="#222" textLength="55.7" lengthAdjust="spacingAndGlyphs">Keyboard shortcuts</text>
<text x="257.2" y="398.6" font-family="Liberation Sans" font-size="6.3" fill="#222" textLength="150.5" lengthAdjust="spacingAndGlyphs">Map data ©2023 GeoBasis-DE/BKG (©2009), Google</text>
<text x="415.3" y="398.6" font-family="Liberation Sans" font-size="6.3" fill="#222" textLength="37.9" lengthAdjust="spacingAndGlyphs">Terms of Use</text>
<text x="460.4" y="398.6" font-family="Liberation Sans" font-size="6.3" fill="#222" textLength="53.6" lengthAdjust="spacingAndGlyphs">Report a map error</text>
<line x1="253" y1="393" x2="253" y2="400" stroke="#ccc" stroke-width="0.6"/>
<line x1="411.5" y1="393" x2="411.5" y2="400" stroke="#ccc" stroke-width="0.6"/>
<line x1="457.5" y1="393" x2="457.5" y2="400" stroke="#ccc" stroke-width="0.6"/>
</g>
<rect x="32" y="214" width="108" height="26" fill="#fff" filter="url(#sh)"/>
<line x1="76.4" y1="214" x2="76.4" y2="240" stroke="#e6e6e6" stroke-width="0.8"/>
<text x="54.5" y="230.9" font-family="Liberation Sans" font-size="11.5" font-weight="bold" fill="#111" text-anchor="middle">Map</text>
<text x="108.2" y="230.9" font-family="Liberation Sans" font-size="11.5" fill="#565656" text-anchor="middle">Satellite</text>
<rect x="486" y="214" width="26" height="26" fill="#fff" filter="url(#sh)"/>
<path d="M494.5 225 V222.5 H497 M501 222.5 H503.5 V225 M503.5 229 V231.5 H501 M497 231.5 H494.5 V229" fill="none" stroke="#666" stroke-width="1.5"/>
<rect x="486" y="287" width="26" height="25.5" fill="#fff" filter="url(#sh)"/>
<g fill="#fbbc04" stroke="#d08a00" stroke-width="0.45"><circle cx="498.8" cy="293.2" r="2.9"/><path d="M495.2 296.8 Q498.8 295.6 502.4 296.8 L503.9 303.2 L502.4 303.6 L501.6 300.5 L501.4 308.5 L499.3 308.5 L498.8 304.5 L498.3 308.5 L496.2 308.5 L496 300.5 L495.2 303.6 L493.7 303.2 Z"/></g>
<rect x="486" y="333" width="26" height="51.5" fill="#fff" filter="url(#sh)"/>
<line x1="490" y1="358.75" x2="508" y2="358.75" stroke="#e6e6e6" stroke-width="0.8"/>
<path d="M499.1 339.4 V351.8 M492.9 345.6 H505.3 M492.9 371.6 H505.3" stroke="#666" stroke-width="1.8"/>
</svg>

<div class="panel" style="left:541px;top:197px;width:242px;height:213px"></div>
<div class="abs" style="left:541px;top:197px;width:242px;height:216px;overflow:hidden">
  <div class="abs" style="left:10px;top:12px;font-size:12.9px;line-height:15px;color:#333;letter-spacing:-0.25px">Electrical Safety Alerts</div>
  <div class="abs" style="left:178px;top:10.5px;width:55px;height:22px;background:#4a93e4;border-radius:2px;color:#fff;font-size:9px;line-height:22px;text-align:center">New Alert</div>
  <div class="abs" style="left:9px;top:39px;width:224px;height:30px;background:#f4f5f7;border-bottom:1px solid #e3e5e8"></div>
  <div class="abs" style="left:17.5px;top:49.5px;font-size:8.6px;line-height:11px;color:#8a8a8a">Name</div>
  <div class="abs" style="left:98px;top:49.5px;font-size:8.6px;line-height:11px;color:#8a8a8a">Date</div>
  <div class="abs" style="left:185.5px;top:49.5px;font-size:8.6px;line-height:11px;color:#8a8a8a">Edit</div>

  <div class="lk" style="top:78px"><span style="letter-spacing:-0.22px">TBT06 Electrical</span><br>resets v1</div>
  <div class="dt" style="top:85.5px">08/11/2021</div>
  <svg class="abs" style="left:186px;top:84.0px" width="15" height="15" viewBox="0 0 15 15"><path d="M1.4 13.6 L2.3 9.6 L10.1 1.8 Q11.2 0.7 12.3 1.8 L13.2 2.7 Q14.3 3.8 13.2 4.9 L5.4 12.7 Z M9 2.9 L12.1 6 M2.3 9.6 L5.4 12.7" fill="none" stroke="#555" stroke-width="1" stroke-linejoin="round"/></svg>
  <div class="sep" style="top:111px"></div>
  <div class="lk" style="top:121px"><span style="letter-spacing:-0.22px">TBT05 Electrical</span><br>panel safety v1</div>
  <div class="dt" style="top:128.5px">08/11/2021</div>
  <svg class="abs" style="left:186px;top:127.1px" width="15" height="15" viewBox="0 0 15 15"><path d="M1.4 13.6 L2.3 9.6 L10.1 1.8 Q11.2 0.7 12.3 1.8 L13.2 2.7 Q14.3 3.8 13.2 4.9 L5.4 12.7 Z M9 2.9 L12.1 6 M2.3 9.6 L5.4 12.7" fill="none" stroke="#555" stroke-width="1" stroke-linejoin="round"/></svg>
  <div class="sep" style="top:154px"></div>
  <div class="lk" style="top:164px">Key lessons -<br>Electric shock<br>risk, Metal clad<br>light switch</div>
  <div class="dt" style="top:184.5px">08/02/2021</div>
  <svg class="abs" style="left:186px;top:182.9px" width="15" height="15" viewBox="0 0 15 15"><path d="M1.4 13.6 L2.3 9.6 L10.1 1.8 Q11.2 0.7 12.3 1.8 L13.2 2.7 Q14.3 3.8 13.2 4.9 L5.4 12.7 Z M9 2.9 L12.1 6 M2.3 9.6 L5.4 12.7" fill="none" stroke="#555" stroke-width="1" stroke-linejoin="round"/></svg>
</div>

<div class="abs" style="left:16px;top:427px;font-size:12.8px;line-height:14px;color:#3589d1;text-decoration:underline">South</div>
<div class="abs" style="left:58.5px;top:431.6px;font-size:7.5px;line-height:10px;color:#555">Code 1 Defects [110/110]</div>

<div class="bc" style="left:16px"><div class="t">Fixed Wire Testing</div><div class="s">Inspection over<br>due</div></div>
<div class="bc" style="left:127.7px"><div class="t">LV Inspection</div><div class="s">Inspection over<br>due</div></div>
<div class="bc" style="left:239.3px"><div class="t">Isolator Checks</div><div class="s">Inspection over<br>due</div></div>
<div class="bc" style="left:351px"><div class="t">RCD Checks</div><div class="s">Inspection over<br>due</div></div>
<div class="bc" style="left:462.7px"><div class="t">Emergency Device<br>Checks</div><div class="s s2">Inspection over<br>due</div></div>
<div class="bc" style="left:574.3px"><div class="t">Emergency Lighting<br>Checks</div><div class="s s2">Inspection over<br>due</div></div>
<div class="bc" style="left:686px"><div class="t">Portable Appliance<br>Testing</div><div class="s s2">Inspection over<br>due</div></div>
</body></html>
